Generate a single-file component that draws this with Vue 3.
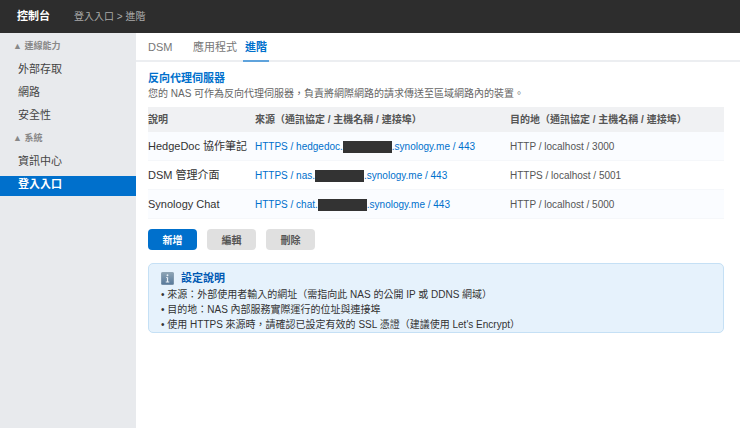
<template>
  <div class="panel">
    <header class="topbar">
      <strong class="topbar-title">控制台</strong>
      <span class="breadcrumb">登入入口 &gt; 進階</span>
    </header>

    <div class="body">
      <nav class="sidebar">
        <section v-for="group in menu" :key="group.title">
          <h2 class="group-title">▲ {{ group.title }}</h2>
          <a
            v-for="item in group.items"
            :key="item"
            href="#"
            class="menu-item"
            :class="{ active: item === activeItem }"
            @click.prevent="activeItem = item"
          >{{ item }}</a>
        </section>
      </nav>

      <main class="main">
        <div class="tabs" role="tablist">
          <button
            v-for="tab in tabs"
            :key="tab"
            type="button"
            role="tab"
            class="tab"
            :class="{ active: tab === activeTab }"
            :aria-selected="tab === activeTab"
            @click="activeTab = tab"
          ><span class="tab-label">{{ tab }}</span></button>
        </div>

        <div class="content">
          <h1 class="title">反向代理伺服器</h1>
          <p class="desc">您的 NAS 可作為反向代理伺服器，負責將網際網路的請求傳送至區域網路內的裝置。</p>

          <table class="rules">
            <colgroup>
              <col class="col-name">
              <col class="col-source">
              <col>
            </colgroup>
            <thead>
              <tr>
                <th>說明</th>
                <th>來源（通訊協定 / 主機名稱 / 連接埠）</th>
                <th>目的地（通訊協定 / 主機名稱 / 連接埠）</th>
              </tr>
            </thead>
            <tbody>
              <tr v-for="rule in rules" :key="rule.name">
                <td class="name">{{ rule.name }}</td>
                <td class="source">HTTPS / {{ rule.host }}.<span class="redacted"></span>.synology.me / 443</td>
                <td>{{ rule.target }}</td>
              </tr>
            </tbody>
          </table>

          <div class="actions">
            <button type="button" class="btn primary">新增</button>
            <button type="button" class="btn">編輯</button>
            <button type="button" class="btn">刪除</button>
          </div>

          <aside class="info">
            <h2 class="info-title">
              <svg class="info-icon" viewBox="0 0 26 26" aria-hidden="true">
                <defs>
                  <linearGradient id="infoBg" x1="0" y1="0" x2="0" y2="1">
                    <stop offset="0" stop-color="#8fa5b5" />
                    <stop offset="1" stop-color="#56789a" />
                  </linearGradient>
                </defs>
                <rect x="0.5" y="0.5" width="25" height="25" rx="3" fill="url(#infoBg)" stroke="#6f8798" />
                <circle cx="13" cy="6.5" r="1.9" fill="#e9f0f6" />
                <path d="M10 10.5h4.3v8.7h2.2v1.6h-7v-1.6h2.3v-7.1H10z" fill="#e9f0f6" />
              </svg>
              設定說明
            </h2>
            <ul class="info-list">
              <li v-for="note in notes" :key="note">{{ note }}</li>
            </ul>
          </aside>
        </div>
      </main>
    </div>
  </div>
</template>

<script setup>
import { ref } from 'vue';

const menu = [
  { title: '連線能力', items: ['外部存取', '網路', '安全性'] },
  { title: '系統', items: ['資訊中心', '登入入口'] },
];
const activeItem = ref('登入入口');

const tabs = ['DSM', '應用程式', '進階'];
const activeTab = ref('進階');

const rules = [
  { name: 'HedgeDoc 協作筆記', host: 'hedgedoc', target: 'HTTP / localhost / 3000' },
  { name: 'DSM 管理介面', host: 'nas', target: 'HTTPS / localhost / 5001' },
  { name: 'Synology Chat', host: 'chat', target: 'HTTP / localhost / 5000' },
];

const notes = [
  '來源：外部使用者輸入的網址（需指向此 NAS 的公開 IP 或 DDNS 網域）',
  '目的地：NAS 內部服務實際運行的位址與連接埠',
  "使用 HTTPS 來源時，請確認已設定有效的 SSL 憑證（建議使用 Let's Encrypt）",
];
</script>

<style>
body {
  margin: 0;
}
</style>

<style scoped>
.panel {
  display: flex;
  flex-direction: column;
  min-height: 100vh;
  background: #fff;
  color: #555;
  font-family: "Liberation Sans", "Noto Sans CJK TC", sans-serif;
  font-size: 10px;
  line-height: 15px;
}

h1,
h2,
p,
ul {
  margin: 0;
  padding: 0;
}

button {
  border: none;
  font-family: inherit;
  cursor: pointer;
}

.topbar {
  display: flex;
  align-items: center;
  gap: 24px;
  height: 33px;
  padding: 0 17px;
  background: #2d2d2d;
}

.topbar-title {
  color: #fff;
  font-size: 11px;
}

.breadcrumb {
  color: #aaa;
}

.body {
  display: flex;
  flex: 1;
}

.sidebar {
  flex: none;
  width: 136px;
  padding-top: 5px;
  box-sizing: border-box;
  background: #e8eaed;
}

.group-title {
  margin-bottom: 7px;
  padding-left: 13px;
  color: #888;
  font-size: 9px;
  font-weight: bold;
  line-height: 16px;
}

.menu-item {
  display: block;
  margin-bottom: 3px;
  padding: 0 18px 4px;
  color: #444;
  font-size: 11px;
  line-height: 16px;
  text-decoration: none;
}

.menu-item.active {
  background: #0070cc;
  color: #fff;
  font-weight: bold;
}

.main {
  flex: 1;
  min-width: 0;
}

.tabs {
  display: flex;
  gap: 4px;
  padding-left: 10px;
  border-bottom: 2px solid #eceef1;
}

/* pulled down so the active underline covers the border of the row */
.tab {
  min-width: 41px;
  margin-bottom: -2px;
  padding: 0;
  background: none;
  color: #777;
  font-size: 11px;
  line-height: 28px;
  text-align: left;
}

.tab-label {
  display: inline-block;
  height: 29px;
  padding: 0 2px;
  box-sizing: border-box;
  vertical-align: top;
}

.tab.active {
  color: #0070cc;
  font-weight: bold;
}

.tab.active .tab-label {
  border-bottom: 2px solid #5fa3dc;
}

.content {
  padding: 8px 16px 16px 12px;
}

.title {
  color: #0070cc;
  font-size: 11px;
  line-height: 16px;
}

.desc {
  margin-bottom: 5px;
  color: #666;
  line-height: 16px;
}

.rules {
  width: 100%;
  border-collapse: collapse;
  table-layout: fixed;
}

.col-name {
  width: 107px;
}

.col-source {
  width: 255px;
}

.rules th,
.rules td {
  padding: 0;
  text-align: left;
  white-space: nowrap;
}

.rules th {
  height: 25px;
  background: #f0f1f3;
  font-weight: bold;
}

.rules td {
  height: 28px;
  border-bottom: 1px solid #f5f7fa;
}

.rules tbody tr:nth-child(odd) {
  background: #fafcff;
}

.rules .name {
  color: #333;
  font-size: 11px;
}

.rules .source {
  color: #0070cc;
}

.redacted {
  display: inline-block;
  width: 49px;
  height: 12px;
  background: #333;
  vertical-align: middle;
}

.actions {
  display: flex;
  gap: 10px;
  margin: 10px 0 13px;
}

.btn {
  width: 49px;
  height: 21px;
  padding: 0;
  border-radius: 4px;
  background: #e0e0e0;
  color: #555;
  font-size: 10px;
  font-weight: bold;
}

.btn.primary {
  background: #0070cc;
  color: #fff;
}

.info {
  padding: 5px 12px 0;
  border: 1px solid #c5e0f5;
  border-radius: 5px;
  background: #e6f2fc;
}

.info-title {
  display: flex;
  align-items: center;
  gap: 7px;
  color: #0059b3;
  font-size: 11px;
  line-height: 18px;
}

.info-icon {
  width: 13px;
  height: 13px;
}

.info-list {
  color: #333;
  list-style: none;
}

.info-list li::before {
  content: "• ";
}
</style>
